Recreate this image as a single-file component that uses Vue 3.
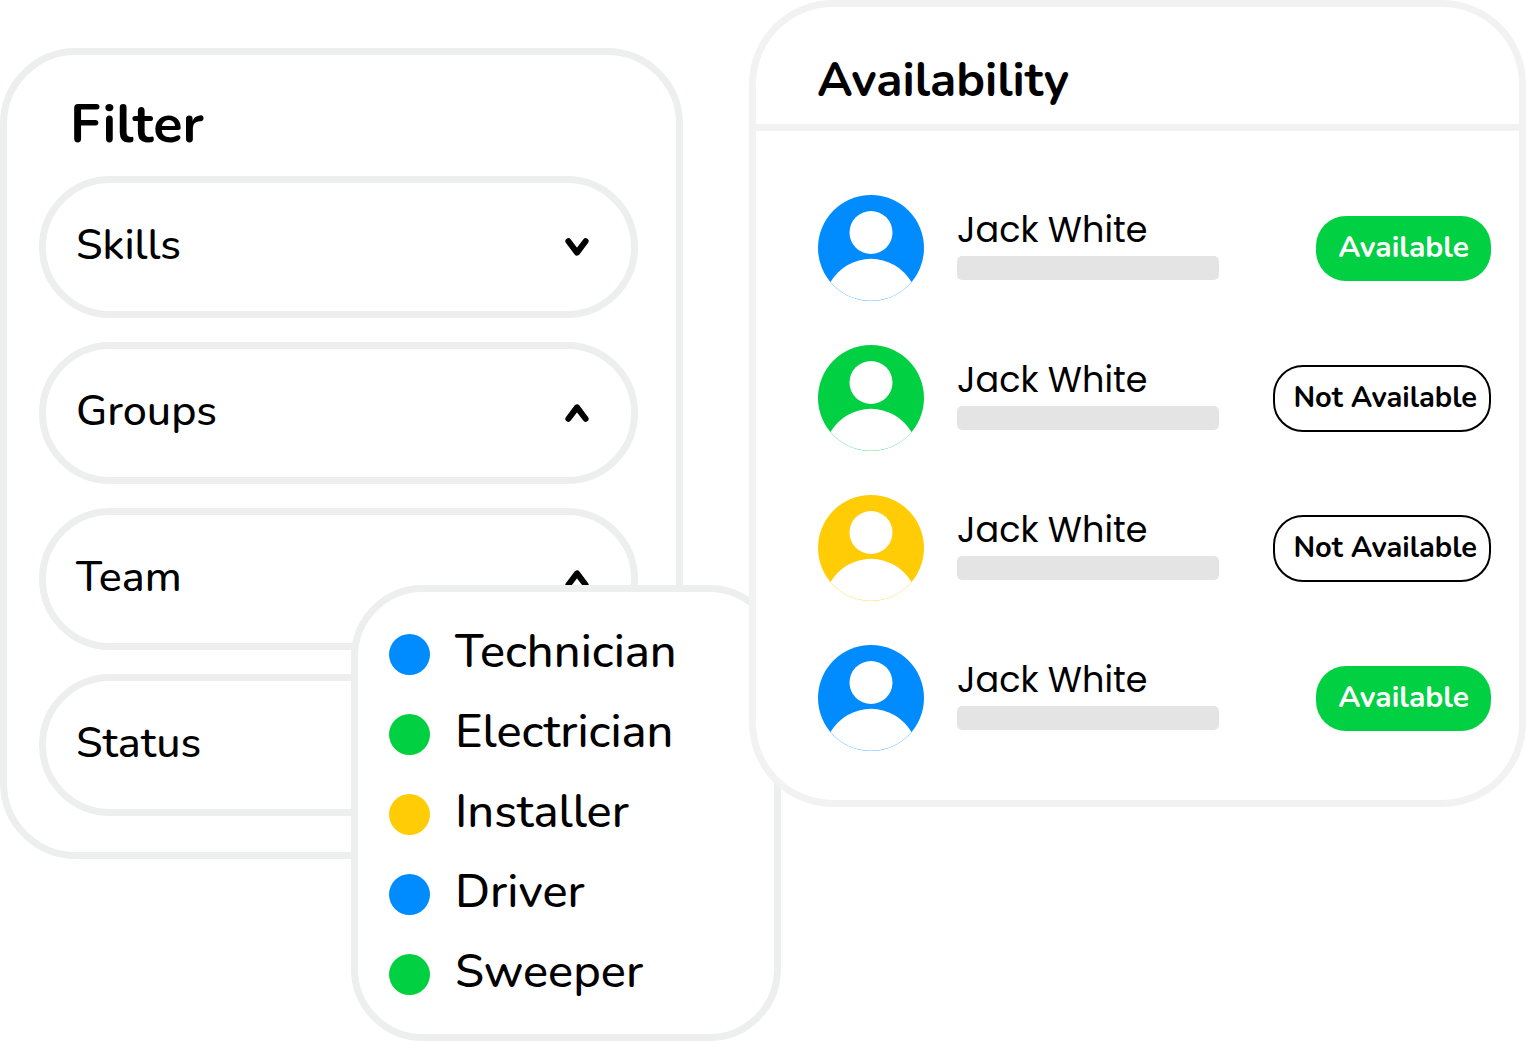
<template>
  <main class="page">
    <section class="filter">
      <h2 class="filter-title">Filter</h2>
      <div class="filter-list">
        <button
          v-for="item in filters"
          :key="item.name"
          type="button"
          class="filter-item"
          :aria-expanded="item.open"
          @click="item.open = !item.open"
        >
          <span class="filter-name">{{ item.name }}</span>
          <svg class="chevron" :class="{ open: item.open }" viewBox="0 0 24 18" aria-hidden="true">
            <path d="M3.4 3.2 L12 14.6 L20.6 3.2" />
          </svg>
        </button>
      </div>

      <ul class="menu">
        <li v-for="role in roles" :key="role.name" class="menu-item">
          <span class="dot" :class="role.color"></span>
          <span class="menu-name">{{ role.name }}</span>
        </li>
      </ul>
    </section>

    <section class="card">
      <header class="card-header">
        <h2 class="card-title">Availability</h2>
      </header>
      <ul class="people">
        <li v-for="person in people" :key="person.id" class="person">
          <svg class="avatar" :class="person.color" viewBox="0 0 106 106" aria-hidden="true">
            <circle cx="53" cy="53" r="53" fill="currentColor" />
            <circle cx="53" cy="37.5" r="21.5" fill="#fff" />
            <path d="M12.5 87 A47 47 0 0 1 93.5 87 A53 53 0 0 1 12.5 87 Z" fill="#fff" />
          </svg>
          <div class="info">
            <span class="name">{{ person.name }}</span>
            <span class="bar"></span>
          </div>
          <span v-if="person.available" class="badge available">Available</span>
          <span v-else class="badge">Not Available</span>
        </li>
      </ul>
    </section>
  </main>
</template>

<script setup>
import { ref } from 'vue'

const filters = ref([
  { name: 'Skills', open: false },
  { name: 'Groups', open: true },
  { name: 'Team', open: true },
  { name: 'Status', open: false },
])

const roles = [
  { name: 'Technician', color: 'blue' },
  { name: 'Electrician', color: 'green' },
  { name: 'Installer', color: 'yellow' },
  { name: 'Driver', color: 'blue' },
  { name: 'Sweeper', color: 'green' },
]

const people = [
  { id: 1, name: 'Jack White', color: 'blue', available: true },
  { id: 2, name: 'Jack White', color: 'green', available: false },
  { id: 3, name: 'Jack White', color: 'yellow', available: false },
  { id: 4, name: 'Jack White', color: 'blue', available: true },
]
</script>

<style>
body {
  margin: 0;
  background: #fff;
}
</style>

<style scoped>
.page {
  display: grid;
  grid-template-columns: minmax(0, 683fr) minmax(0, 777fr);
  column-gap: 66px;
  align-items: start;
  min-height: 100vh;
  color: #000;
  font-family: Nunito, Lato, sans-serif;
}
.page * {
  box-sizing: border-box;
}
h2,
ul {
  margin: 0;
  padding: 0;
  list-style: none;
}
.blue {
  color: #008cff;
}
.green {
  color: #00d042;
}
.yellow {
  color: #ffcc05;
}

.filter {
  position: relative;
  margin-top: 48px;
  padding: 32px 38px 36px 32px;
  border: 7px solid #edefee;
  border-radius: 76px;
}
.filter-title {
  padding: 1px 0 0 31px;
  margin-bottom: 16px;
  font-size: 54px;
  font-weight: 700;
  line-height: 72px;
}
.filter-list {
  display: flex;
  flex-direction: column;
  gap: 24px;
}
.filter-item {
  display: flex;
  align-items: center;
  justify-content: space-between;
  width: 100%;
  height: 142px;
  padding: 0 42px 0 30px;
  border: 7px solid #edefee;
  border-radius: 71px;
  background: #fff;
  color: inherit;
  font: inherit;
  font-size: 43px;
  font-weight: 500;
  cursor: pointer;
}
.filter-name {
  padding-bottom: 4px;
}
.chevron {
  width: 24px;
  height: 18px;
  fill: none;
  stroke: #000;
  stroke-width: 6;
  stroke-linecap: round;
  stroke-linejoin: round;
}
.chevron.open {
  transform: rotate(180deg);
}

.menu {
  position: absolute;
  top: 530px;
  left: 344px;
  width: 430px;
  padding: 22px 31px 20px;
  border: 7px solid #edefee;
  border-radius: 72px;
  background: #fff;
}
.menu-item {
  display: flex;
  align-items: center;
  gap: 25px;
  height: 80px;
  font-size: 47px;
  font-weight: 500;
}
.menu-name {
  padding-bottom: 6px;
}
.dot {
  width: 41px;
  height: 41px;
  border-radius: 50%;
  background: currentColor;
}

.card {
  position: relative;
  z-index: 1;
  border: 7px solid #f2f2f2;
  border-radius: 84px;
  background: #fff;
}
.card-header {
  padding: 41px 61px 12px;
  border-bottom: 7px solid #f2f2f2;
}
.card-title {
  font-size: 48px;
  font-weight: 700;
  line-height: 64px;
}
.people {
  display: flex;
  flex-direction: column;
  gap: 44px;
  padding: 64px 28px 49px 62px;
}
.person {
  display: flex;
  align-items: center;
}
.avatar {
  flex: none;
  width: 106px;
  height: 106px;
  margin-right: 33px;
}
.info {
  display: flex;
  flex: 0 1 262px;
  flex-direction: column;
  gap: 6px;
  padding-bottom: 6px;
}
.name {
  font-family: Poppins, Inter, sans-serif;
  font-size: 35px;
  line-height: 40px;
  white-space: nowrap;
}
.bar {
  height: 24px;
  border-radius: 5px;
  background: #e4e4e4;
}
.badge {
  margin-left: auto;
  padding: 12px 12px 13px 18px;
  border: 2px solid #000;
  border-radius: 30px;
  font-size: 29px;
  font-weight: 700;
  line-height: 38px;
  white-space: nowrap;
}
.badge.available {
  padding: 13px 22px 14px;
  border: none;
  background: #00d042;
  color: #fff;
  font-size: 30px;
}
</style>
